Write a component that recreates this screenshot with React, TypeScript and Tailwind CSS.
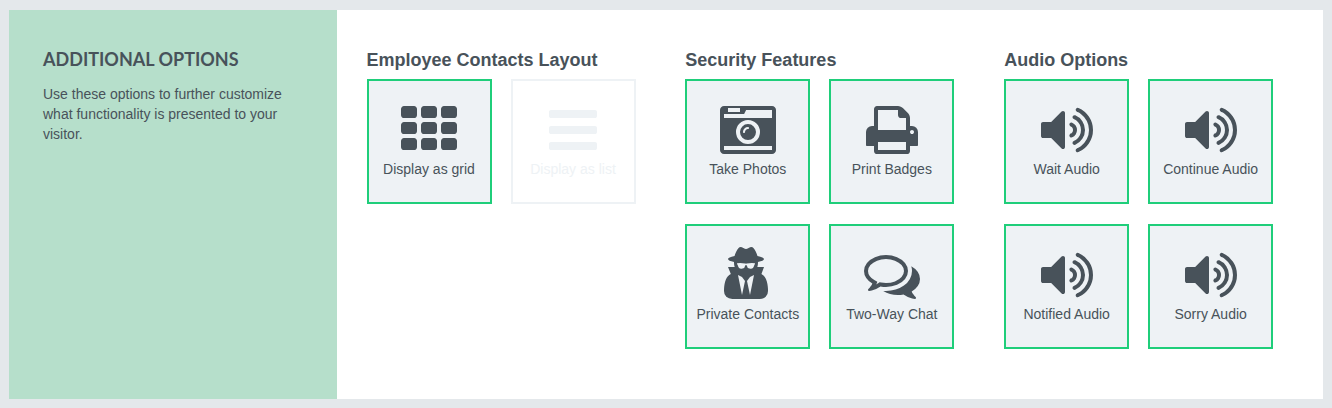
import { useState } from 'react';

const icons = {
  grid: 'M0 224q0-40 28-68t68-28h320q40 0 68 28t28 68v192q0 40-28 68t-68 28h-320q-40 0-68-28t-28-68zM640 224q0-40 28-68t68-28h320q40 0 68 28t28 68v192q0 40-28 68t-68 28h-320q-40 0-68-28t-28-68zM1280 224q0-40 28-68t68-28h320q40 0 68 28t28 68v192q0 40-28 68t-68 28h-320q-40 0-68-28t-28-68zM0 736q0-40 28-68t68-28h320q40 0 68 28t28 68v192q0 40-28 68t-68 28h-320q-40 0-68-28t-28-68zM640 736q0-40 28-68t68-28h320q40 0 68 28t28 68v192q0 40-28 68t-68 28h-320q-40 0-68-28t-28-68zM1280 736q0-40 28-68t68-28h320q40 0 68 28t28 68v192q0 40-28 68t-68 28h-320q-40 0-68-28t-28-68zM0 1248q0-40 28-68t68-28h320q40 0 68 28t28 68v192q0 40-28 68t-68 28h-320q-40 0-68-28t-28-68zM640 1248q0-40 28-68t68-28h320q40 0 68 28t28 68v192q0 40-28 68t-68 28h-320q-40 0-68-28t-28-68zM1280 1248q0-40 28-68t68-28h320q40 0 68 28t28 68v192q0 40-28 68t-68 28h-320q-40 0-68-28t-28-68z',
  list: 'M1664 1344v128q0 26-19 45t-45 19h-1408q-26 0-45-19t-19-45v-128q0-26 19-45t45-19h1408q26 0 45 19t19 45zm0-512v128q0 26-19 45t-45 19h-1408q-26 0-45-19t-19-45v-128q0-26 19-45t45-19h1408q26 0 45 19t19 45zm0-512v128q0 26-19 45t-45 19h-1408q-26 0-45-19t-19-45v-128q0-26 19-45t45-19h1408q26 0 45 19t19 45z',
  camera: 'M928 832q0-14-9-23t-23-9q-66 0-113 47t-47 113q0 14 9 23t23 9 23-9 9-23q0-40 28-68t68-28q14 0 23-9t9-23zm224 130q0 106-75 181t-181 75-181-75-75-181 75-181 181-75 181 75 75 181zm-1024 574h1536v-128h-1536v128zm1152-574q0-159-112.5-271.5t-271.5-112.5-271.5 112.5-112.5 271.5 112.5 271.5 271.5 112.5 271.5-112.5 112.5-271.5zm-1024-642h384v-128h-384v128zm-128 192h1536v-256h-828l-64 128h-644v128zm1664-256v1280q0 53-37.5 90.5t-90.5 37.5h-1536q-53 0-90.5-37.5t-37.5-90.5v-1280q0-53 37.5-90.5t90.5-37.5h1536q53 0 90.5 37.5t37.5 90.5z',
  printer: 'M448 1536h896v-256h-896v256zm0-640h896v-384h-160q-40 0-68-28t-28-68v-160h-640v640zm1152 64q0-26-19-45t-45-19-45 19-19 45 19 45 45 19 45-19 19-45zm128 0v416q0 13-9.5 22.5t-22.5 9.5h-224v160q0 40-28 68t-68 28h-960q-40 0-68-28t-28-68v-160h-224q-13 0-22.5-9.5t-9.5-22.5v-416q0-79 56.5-135.5t135.5-56.5h64v-544q0-40 28-68t68-28h672q40 0 88 20t76 48l152 152q28 28 48 76t20 88v256h64q79 0 135.5 56.5t56.5 135.5z',
  spy: 'M704 1536l96-448-96-128-128-64zM960 1536l128-640-128 64-96 128zM1120 526q-2-4-4-6-10-8-96-8-70 0-167 19-7 2-21 2t-21-2q-97-19-167-19-86 0-96 8-2 2-4 6 2 18 4 27 2 3 7.5 6.5t7.5 10.5q2 4 7.5 20.5t7 20.5 7.5 17 8.5 17 9 14 12 13.5 14 9.5 17.5 8 20.5 4 24.5 2q36 0 59-12.5t32.5-30 14.5-34.5 11.5-29.5 17.5-12.5h12q11 0 17.5 12.5t11.5 29.5 14.5 34.5 32.5 30 59 12.5q13 0 24.5-2t20.5-4 17.5-8 14-9.5 12-13.5 9-14 8.5-17 7.5-17 7-20.5 7.5-20.5q2-7 7.5-10.5t7.5-6.5q2-9 4-27zM1536 1405q0 121-73 190t-194 69h-874q-121 0-194-69t-73-190q0-61 4.5-118t19-125.5 37.5-123.5 63.5-103.5 93.5-74.5l-90-220h214q-22-64-22-128 0-12 2-32-194-40-194-96 0-57 210-99 17-62 51.5-134t70.5-114q32-37 76-37 30 0 84 31t84 31 84-31 84-31q44 0 76 37 36 42 70.5 114t51.5 134q210 42 210 99 0 56-194 96 7 81-20 160h214l-82 225q63 33 107.5 96.5t65.5 143.5 29 151.5 8 148.5z',
  chat: 'M704 384q-153 0-286 52t-211.5 141-78.5 191q0 82 53 158t149 132l97 56-35 84q34-20 62-39l44-31 53 10q78 14 153 14 153 0 286-52t211.5-141 78.5-191-78.5-191-211.5-141-286-52zm0-128q191 0 353.5 68.5t256.5 186.5 94 257-94 257-256.5 186.5-353.5 68.5q-86 0-176-16-124 88-278 128-36 9-86 16h-3q-11 0-20.5-8t-11.5-21q-1-3-1-6.5t.5-6.5 2-6l2.5-5 3.5-5.5 4-5 4.5-5 4-4.5q5-6 23-25t26-29.5 22.5-29 25-38.5 20.5-44q-124-72-195-177t-71-224q0-139 94-257t256.5-186.5 353.5-68.5zm822 1169q10 24 20.5 44t25 38.5 22.5 29 26 29.5 23 25q1 1 4 4.5t4.5 5 4 5 3.5 5.5l2.5 5 2 6 .5 6.5-1 6.5q-3 14-13 22t-22 7q-50-7-86-16-154-40-278-128-90 16-176 16-271 0-472-132 58 4 88 4 161 0 309-45t264-129q125-92 192-212t67-254q0-77-23-152 129 71 204 178t75 230q0 120-71 224.5t-195 176.5z',
  volume: 'M832 352v1088q0 26-19 45t-45 19-45-19l-333-333h-262q-26 0-45-19t-19-45v-384q0-26 19-45t45-19h262l333-333q19-19 45-19t45 19 19 45zm384 544q0 76-42.5 141.5t-112.5 93.5q-10 5-25 5-26 0-45-18.5t-19-45.5q0-21 12-35.5t29-25 34-23 29-36 12-56.5-12-56.5-29-36-34-23-29-25-12-35.5q0-27 19-45.5t45-18.5q15 0 25 5 70 27 112.5 93t42.5 142zm256 0q0 153-85 282.5t-225 188.5q-13 5-25 5-27 0-46-19t-19-45q0-39 39-59 56-29 76-44 74-54 115.5-135.5t41.5-173.5-41.5-173.5-115.5-135.5q-20-15-76-44-39-20-39-59 0-26 19-45t45-19q13 0 26 5 140 59 225 188.5t85 282.5zm256 0q0 230-127 422.5t-338 283.5q-13 5-26 5-26 0-45-19t-19-45q0-36 39-59 7-4 22.5-10.5t22.5-10.5q46-25 82-51 123-91 192-227t69-289-69-289-192-227q-36-26-82-51-7-4-22.5-10.5t-22.5-10.5q-39-23-39-59 0-26 19-45t45-19q13 0 26 5 211 91 338 283.5t127 422.5z',
};

type IconName = keyof typeof icons;
type Option = { label: string; icon: IconName };
type Group = { title: string; exclusive?: boolean; options: Option[] };

const groups: Group[] = [
  {
    title: 'Employee Contacts Layout',
    exclusive: true,
    options: [
      { label: 'Display as grid', icon: 'grid' },
      { label: 'Display as list', icon: 'list' },
    ],
  },
  {
    title: 'Security Features',
    options: [
      { label: 'Take Photos', icon: 'camera' },
      { label: 'Print Badges', icon: 'printer' },
      { label: 'Private Contacts', icon: 'spy' },
      { label: 'Two-Way Chat', icon: 'chat' },
    ],
  },
  {
    title: 'Audio Options',
    options: [
      { label: 'Wait Audio', icon: 'volume' },
      { label: 'Continue Audio', icon: 'volume' },
      { label: 'Notified Audio', icon: 'volume' },
      { label: 'Sorry Audio', icon: 'volume' },
    ],
  },
];

function OptionTile({ option, active, onClick }: { option: Option; active: boolean; onClick: () => void }) {
  return (
    <button
      type="button"
      aria-pressed={active}
      onClick={onClick}
      className={`flex size-[125px] cursor-pointer flex-col items-center gap-px border-2 pt-[21px] text-sm whitespace-nowrap ${
        active ? 'border-[#1fce7a] bg-[#eef2f5] text-[#48525a]' : 'border-[#eef2f5] bg-white text-[#eef2f5]'
      }`}
    >
      <svg viewBox="0 0 1792 1792" className="size-14 shrink-0" fill="currentColor" aria-hidden="true">
        <path d={icons[option.icon]} />
      </svg>
      <span>{option.label}</span>
    </button>
  );
}

function OptionGroup({ group }: { group: Group }) {
  const [selected, setSelected] = useState<string[]>(
    group.exclusive ? [group.options[0].label] : group.options.map((o) => o.label),
  );

  const toggle = (label: string) => {
    if (group.exclusive) setSelected([label]);
    else setSelected((s) => (s.includes(label) ? s.filter((l) => l !== label) : [...s, label]));
  };

  return (
    <section>
      <h3 className="mb-2 text-lg leading-[22px] font-bold">{group.title}</h3>
      <div className="flex flex-wrap gap-x-[19px] gap-y-5">
        {group.options.map((o) => (
          <OptionTile key={o.label} option={o} active={selected.includes(o.label)} onClick={() => toggle(o.label)} />
        ))}
      </div>
    </section>
  );
}

export default function App() {
  return (
    <div className="grid min-h-screen grid-cols-[1fr_3fr] bg-[#e4e8eb] pt-2.5 pr-[9px] pb-[9px] pl-[9px] font-['Liberation_Sans',Arial,sans-serif] text-[#48525a]">
      <aside className="bg-[#b6dfcb] px-[34px] pt-[37px]">
        <h2 className="mb-3 font-['Lato',sans-serif] text-lg leading-[25px] font-bold">ADDITIONAL OPTIONS</h2>
        <p className="text-sm">Use these options to further customize what functionality is presented to your visitor.</p>
      </aside>
      <main className="-ml-px grid grid-cols-3 bg-white pt-[39px] pb-[50px] pl-[30px]">
        {groups.map((g) => (
          <OptionGroup key={g.title} group={g} />
        ))}
      </main>
    </div>
  );
}
